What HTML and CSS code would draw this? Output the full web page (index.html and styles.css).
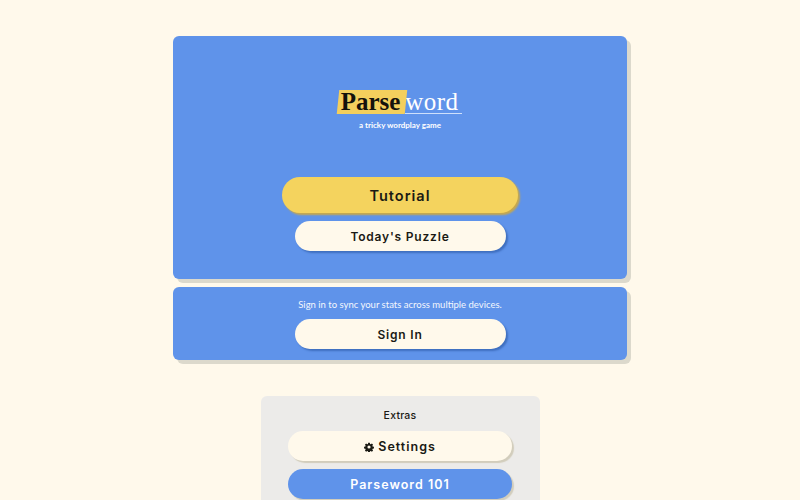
FILE: index.html
```html
<!DOCTYPE html>
<html lang="en">
<head>
<meta charset="utf-8">
<title>Parseword</title>
<link rel="stylesheet" href="styles.css">
</head>
<body>
<main class="page">
  <section class="panel hero">
    <div class="logo">
      <div class="wordmark"><span class="parse"><span class="parse-bg"></span><span class="parse-text">Parse</span></span><span class="word">word</span></div>
      <p class="tagline">a tricky wordplay game</p>
    </div>
    <div class="actions">
      <button class="btn btn-large">Tutorial</button>
      <button class="btn btn-light">Today's Puzzle</button>
    </div>
  </section>
  <section class="panel signin">
    <p class="signin-text">Sign in to sync your stats across multiple devices.</p>
    <button class="btn btn-light">Sign In</button>
  </section>
  <section class="extras">
    <h2 class="extras-title">Extras</h2>
    <button class="btn btn-extra btn-cream"><svg class="gear" viewBox="0 0 24 24" aria-hidden="true"><path fill-rule="evenodd" d="M10 1.5h4l.6 3.2 1.7.7 2.7-1.8 2.8 2.8-1.8 2.7.7 1.7 3.2.6v4l-3.2.6-.7 1.7 1.8 2.7-2.8 2.8-2.7-1.8-1.7.7-.6 3.2h-4l-.6-3.2-1.7-.7-2.7 1.8-2.8-2.8 1.8-2.7-.7-1.7-3.2-.6v-4l3.2-.6.7-1.7-1.8-2.7 2.8-2.8 2.7 1.8 1.7-.7zM12 8.2a3.8 3.8 0 1 0 0 7.6 3.8 3.8 0 0 0 0-7.6z"/></svg> Settings</button>
    <button class="btn btn-extra btn-blue">Parseword 101</button>
  </section>
</main>
</body>
</html>
```
FILE: styles.css
```css
html, body {
  margin: 0;
  height: 500px;
  overflow: hidden;
  background: #fff9eb;
}
.page {
  display: flex;
  flex-direction: column;
  align-items: center;
  padding-top: 36px;
}
.panel {
  box-sizing: border-box;
  width: 454px;
  background: #5f93ea;
  border-radius: 6px;
  box-shadow: 4px 4px 0 #dcd9cc;
  display: flex;
  flex-direction: column;
  align-items: center;
}
.hero {
  height: 243px;
  padding-top: 54px;
}
.logo {
  display: flex;
  flex-direction: column;
  align-items: center;
}
.wordmark {
  display: flex;
  font-family: "Liberation Serif", serif;
  font-size: 25px;
  line-height: 24px;
  height: 24px;
}
.parse {
  position: relative;
  padding: 0 5px 0 3px;
  font-weight: 700;
  color: #14120c;
}
.parse-bg {
  position: absolute;
  inset: 0;
  background: #f4cf5d;
  transform: skewX(-6deg);
}
.parse-text {
  position: relative;
}
.word {
  color: #fff;
  padding: 0 4px 0 0;
  border-bottom: 1px solid #cfe0fb;
  letter-spacing: 0.4px;
}
.tagline {
  margin: 6px 0 0;
  font-family: Lato, sans-serif;
  font-size: 8px;
  line-height: 11px;
  font-weight: 700;
  color: #fff;
}
.actions {
  margin-top: 46px;
  display: flex;
  flex-direction: column;
  align-items: center;
  gap: 8px;
}
.btn {
  display: block;
  border: 0;
  padding: 0;
  font-family: Inter, sans-serif;
  font-weight: 600;
  letter-spacing: 0.8px;
  color: #1a1a14;
  border-radius: 18px;
  text-align: center;
}
.btn-large {
  width: 236px;
  height: 36px;
  font-size: 14.5px;
  letter-spacing: 1px;
  background: #f4d35e;
  box-shadow: 2px 2px 2px #c9a94a;
}
.btn-light {
  width: 211px;
  height: 30px;
  font-size: 12px;
  background: #fff9eb;
  box-shadow: 2px 2px 2px #3f6fbf;
}
.signin {
  margin-top: 8px;
  height: 73px;
  padding-top: 11px;
}
.signin-text {
  margin: 0 0 8px;
  font-family: Lato, sans-serif;
  font-size: 9.5px;
  line-height: 13px;
  color: #f4f7fd;
}
.extras {
  box-sizing: border-box;
  margin-top: 36px;
  width: 279px;
  height: 130px;
  background: #ecebe9;
  border-radius: 6px;
  padding-top: 13px;
  display: flex;
  flex-direction: column;
  align-items: center;
  flex-shrink: 0;
}
.extras-title {
  margin: 0 0 9px;
  font-family: Inter, sans-serif;
  font-size: 10.5px;
  line-height: 13px;
  font-weight: 500;
  letter-spacing: 0.2px;
  color: #1a1a14;
}
.btn-extra {
  width: 224px;
  height: 30px;
  font-size: 12.5px;
  letter-spacing: 1px;
  box-shadow: 2px 2px 1px #d2cdbc;
}
.btn-extra + .btn-extra {
  margin-top: 8px;
}
.btn-cream {
  background: #fff9eb;
}
.btn-blue {
  background: #5f93ea;
  color: #fff;
}
.gear {
  width: 10px;
  height: 10px;
  vertical-align: -1px;
  fill: #1a1a14;
}
```
